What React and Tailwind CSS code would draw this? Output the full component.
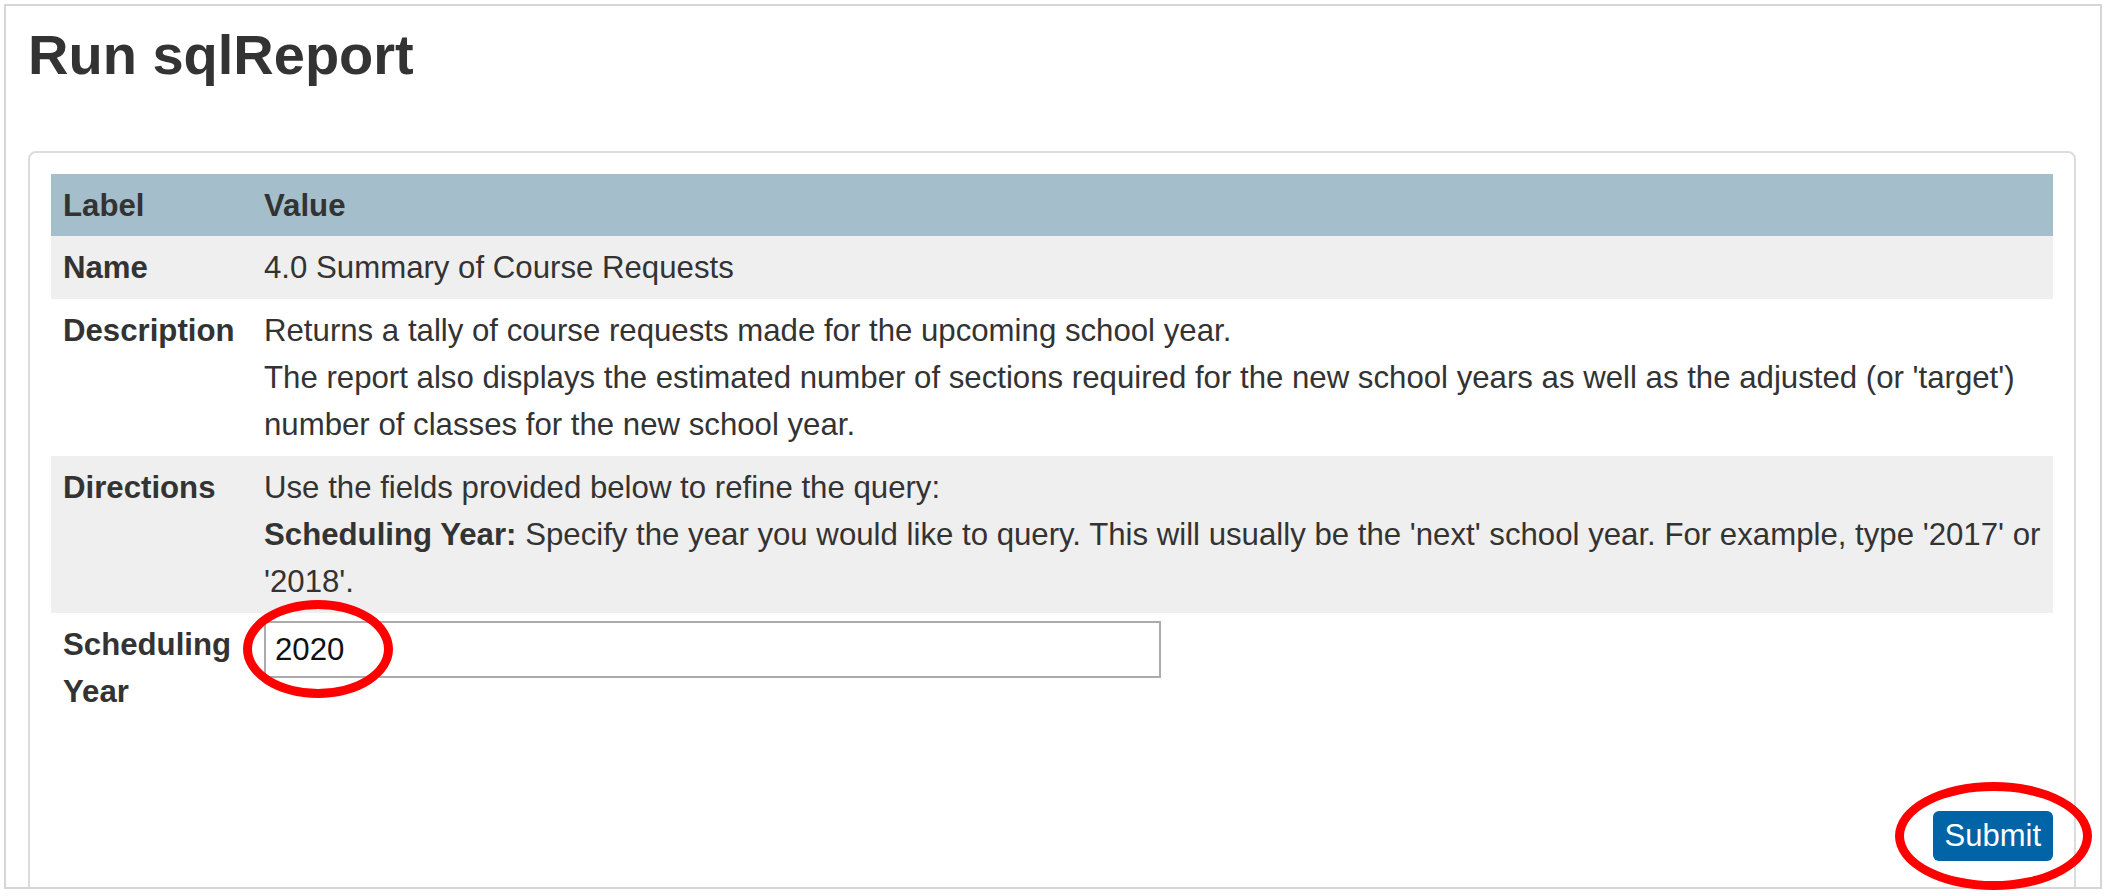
export default function App() {
  const font = { fontFamily: '"Liberation Sans", Arial, sans-serif' };
  return (
    <div className="relative w-[2109px] h-[896px] bg-white overflow-hidden text-[#333333]" style={font}>
      <div className="ml-[4px] mt-[4px] w-[2098px] h-[885px] border-2 border-[#d6d6d6] overflow-hidden">
        <h1 className="pl-[22px] pt-[17px] text-[56px] leading-[64px] font-bold text-[#333333]">Run sqlReport</h1>
        <div className="ml-[22px] mr-[24px] mt-[64px] border-2 border-[#dcdcdc] rounded-[8px] px-[21px] pt-[21px] pb-[60px]">
          <div className="grid grid-cols-[200px_1fr] text-[31.2px] leading-[47px]">
            <div className="bg-[#a4bfcb] font-bold pl-[12px] py-[7.5px]">Label</div>
            <div className="bg-[#a4bfcb] font-bold pl-[13px] py-[7.5px]">Value</div>

            <div className="bg-[#efefef] font-bold pl-[12px] py-[8px]">Name</div>
            <div className="bg-[#efefef] pl-[13px] pr-[8px] py-[8px]">4.0 Summary of Course Requests</div>

            <div className="font-bold pl-[12px] py-[8px]">Description</div>
            <div className="pl-[13px] pr-[8px] py-[8px]">
              <p>Returns a tally of course requests made for the upcoming school year.</p>
              <p>The report also displays the estimated number of sections required for the new school years as well as the adjusted (or 'target') number of classes for the new school year.</p>
            </div>

            <div className="bg-[#efefef] font-bold pl-[12px] py-[8px]">Directions</div>
            <div className="bg-[#efefef] pl-[13px] pr-[4px] py-[8px]">
              <p>Use the fields provided below to refine the query:</p>
              <p>
                <span className="font-bold">Scheduling Year:</span> Specify the year you would like to query. This will usually be the 'next' school year. For example, type '2017' or '2018'.
              </p>
            </div>

            <div className="font-bold pl-[12px] pr-[8px] py-[8px]">Scheduling Year</div>
            <div className="pl-[13px] py-[8px]">
              <div className="w-[897px] h-[57px] border-2 border-[#ababab] bg-white flex items-center pl-[9px] text-[31.2px] text-[#111111]">2020</div>
            </div>
          </div>
          <div className="flex justify-end mt-[88px]">
            <button className="h-[50px] px-[12px] rounded-[6px] bg-[#0064a7] text-white text-[31px] leading-[50px]">Submit</button>
          </div>
        </div>
      </div>
      <div className="absolute left-[243px] top-[600px] w-[150px] h-[98px] rounded-[50%] border-[9px] border-[#ff0000]"></div>
      <div className="absolute left-[1895px] top-[782px] w-[197px] h-[108px] rounded-[50%] border-[9px] border-[#ff0000]"></div>
    </div>
  );
}
